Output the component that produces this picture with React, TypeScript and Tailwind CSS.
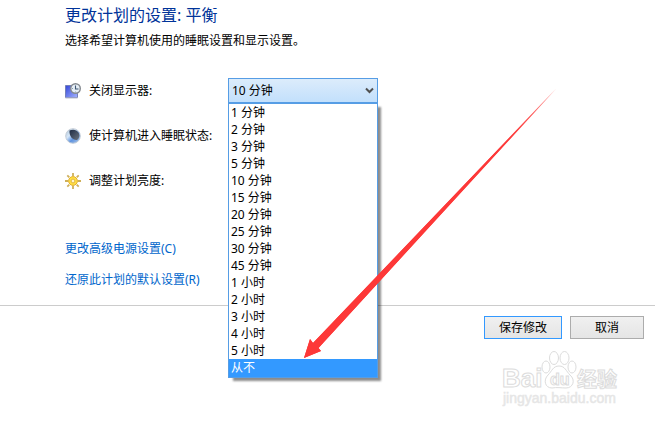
import { useState } from 'react';
import type { ReactNode } from 'react';

const delays = [
  '1 分钟', '2 分钟', '3 分钟', '5 分钟', '10 分钟', '15 分钟', '20 分钟', '25 分钟',
  '30 分钟', '45 分钟', '1 小时', '2 小时', '3 小时', '4 小时', '5 小时', '从不',
];

function DisplayIcon() {
  return (
    <svg className="size-4 shrink-0" viewBox="0 0 16 16" aria-hidden="true">
      <defs>
        <linearGradient id="screen" x1="0" y1="0" x2="1" y2="1">
          <stop offset="0" stopColor="#3346d8" />
          <stop offset="1" stopColor="#a5b4ff" />
        </linearGradient>
      </defs>
      <path d="M0.5 2.5h12v12h-12z" fill="url(#screen)" stroke="#7480b8" />
      <path d="M0.5 15h12" stroke="#b9bdd0" />
      <circle cx="10.5" cy="5.500" r="4.800" fill="#e6eff7" stroke="#84898f" strokeWidth="1.400" />
      <path d="M10.5 2.500v3.500h3" fill="none" stroke="#3d5673" strokeWidth="1.100" />
      <path d="M7 5.500h1M10.5 8.500v1" stroke="#8ca0b4" />
    </svg>
  );
}

function SleepIcon() {
  return (
    <svg className="size-4 shrink-0" viewBox="0 0 16 16" aria-hidden="true">
      <defs>
        <linearGradient id="moon" x1="0" y1="0" x2="1" y2="1">
          <stop offset="0" stopColor="#a9bfd4" />
          <stop offset="0.35" stopColor="#d8e8f8" />
          <stop offset="0.6" stopColor="#5f93e0" />
          <stop offset="1" stopColor="#b3cbe6" />
        </linearGradient>
        <linearGradient id="shade" x1="0" y1="0" x2="1" y2="1">
          <stop offset="0" stopColor="#1d2b44" />
          <stop offset="1" stopColor="#6b7480" />
        </linearGradient>
      </defs>
      <circle cx="8" cy="8" r="7.3" fill="url(#moon)" stroke="#c3ccd6" />
      <path d="M4.500 2.500C8 0.800 12.500 1.600 14 5.500c0.900 2.800 0 5.300-2 6.500C8 12.400 4 8.500 4.500 2.500z" fill="url(#shade)" />
    </svg>
  );
}

function BrightnessIcon() {
  return (
    <svg className="size-4 shrink-0" viewBox="0 0 16 16" aria-hidden="true">
      <path
        d="M8 0v3M8 13v3M0 8h3M13 8h3M2.3 2.3l2 2M11.7 11.7l2 2M2.3 13.7l2-2M11.7 4.3l2-2"
        stroke="#cfb05a"
        strokeWidth="1.8"
      />
      <circle cx="8" cy="8" r="4.400" fill="#ffdf45" stroke="#e3b02c" />
      <circle cx="8" cy="8" r="1.900" fill="#fff6ce" stroke="#dca92c" strokeWidth="0.8" />
    </svg>
  );
}

function SettingLabel({ icon, children }: { icon: ReactNode; children: ReactNode }) {
  return (
    <div className="flex h-[26px] w-[163px] shrink-0 items-center gap-2">
      {icon}
      {children}
    </div>
  );
}

function Pointer() {
  return (
    <svg
      className="pointer-events-none absolute top-2 left-[72px] z-20 h-[276px] w-[260px]"
      viewBox="0 0 260 276"
      aria-hidden="true"
    >
      <defs>
        <linearGradient id="fade" gradientUnits="userSpaceOnUse" x1="256" y1="3" x2="200" y2="62">
          <stop offset="0" stopColor="#fd3838" stopOpacity="0.5" />
          <stop offset="1" stopColor="#fd3838" />
        </linearGradient>
      </defs>
      <path d="M4 272L10 253L13 257L256.500 2.500L18.500 262L21 265Z" fill="url(#fade)" />
      <path d="M4 272L10 253L13 257L256 2.500L18.500 262L21 265Z" fill="url(#fade)" />
    </svg>
  );
}

function Watermark() {
  return (
    <svg
      className="pointer-events-none absolute top-[350px] right-8 h-[60px] w-[124px] font-['Liberation_Sans','Noto_Sans_CJK_SC',sans-serif]"
      viewBox="0 0 124 60"
      aria-label="Baidu 经验 jingyan.baidu.com"
    >
      <g fill="#ffffff" stroke="#dcdcdc" strokeWidth="1">
        <text x="3" y="37" fontSize="26" fontWeight="700">Bai</text>
        <text x="78" y="37" fontSize="20" fontWeight="700">经验</text>
        <ellipse cx="47" cy="17" rx="4" ry="6" />
        <ellipse cx="55" cy="8" rx="4.500" ry="6.500" />
        <ellipse cx="65.500" cy="8" rx="4.500" ry="6.500" />
        <ellipse cx="73" cy="17" rx="4" ry="6" />
        <path d="M60 16c6 0 7 5 11 9c6 5 3 13-4 13c-5 0-9-1-14 0c-7 0-9-8-4-13c4-4 5-9 11-9z" />
        <text x="51" y="35" fontSize="16" fontWeight="700">du</text>
      </g>
      <text x="4" y="53" fontSize="14" fill="#e6e6e6" stroke="#e6e6e6" strokeWidth="0.5">
        jingyan.baidu.com
      </text>
    </svg>
  );
}

export default function App() {
  const [delay, setDelay] = useState('10 分钟');
  return (
    <div className="relative min-h-screen overflow-hidden bg-white pb-8 font-['Noto_Sans','Noto_Sans_CJK_SC',sans-serif] text-xs text-black">
      <main className="pt-[3px] pl-[65px]">
        <h1 className="text-base leading-6 text-[#003399]">更改计划的设置: 平衡</h1>
        <p className="mt-1 leading-5">选择希望计算机使用的睡眠设置和显示设置。</p>

        <div className="mt-[27px] flex flex-col gap-[19px]">
          <div className="flex">
            <SettingLabel icon={<DisplayIcon />}>
              <label htmlFor="display-off">关闭显示器:</label>
            </SettingLabel>
            <div className="relative w-[150px]">
              <select
                id="display-off"
                value={delay}
                onChange={(e) => setDelay(e.target.value)}
                className="block h-[26px] w-full appearance-none border border-[#569de5] bg-linear-to-b from-[#dcecfb] to-[#c1dffc] pl-[3px] outline-none"
              >
                {delays.map((d) => (
                  <option key={d}>{d}</option>
                ))}
              </select>
              <svg className="pointer-events-none absolute top-[9px] right-1 h-2 w-[9px]" viewBox="0 0 9 8" aria-hidden="true">
                <path d="M1 1.500L4.500 5L8 1.500" fill="none" stroke="#505050" strokeWidth="2" />
              </svg>
              <ul
                aria-label="关闭显示器"
                className="absolute top-6 left-0 z-10 w-full border border-t-2 border-[#569de5] bg-white shadow-[4px_4px_2px_-1px_rgba(0,0,0,0.45)]"
              >
                {delays.map((d) => (
                  <li
                    key={d}
                    className={
                      d === '从不'
                        ? 'h-[18px] bg-[#3399ff] pl-0.5 leading-[17px] text-white'
                        : 'h-[17px] pl-0.5 leading-[17px]'
                    }
                  >
                    {d}
                  </li>
                ))}
              </ul>
              <Pointer />
            </div>
          </div>
          <SettingLabel icon={<SleepIcon />}>
            <span className="whitespace-nowrap">使计算机进入睡眠状态:</span>
          </SettingLabel>
          <SettingLabel icon={<BrightnessIcon />}>
            <span>调整计划亮度:</span>
          </SettingLabel>
        </div>

        <nav className="mt-[45px] flex flex-col items-start gap-[11px] leading-5 text-[#0066cc]">
          <a href="#advanced">更改高级电源设置(C)</a>
          <a href="#restore">还原此计划的默认设置(R)</a>
        </nav>
      </main>

      <footer className="mt-[15px] flex justify-end gap-2 border-t border-[#cccccc] pt-[10px] pr-[11px]">
        <button type="button" className="h-[23px] w-[78px] border border-[#3399ff] bg-linear-to-b from-[#f0f0f0] to-[#e5e5e5]">
          保存修改
        </button>
        <button type="button" className="h-[23px] w-[74px] border border-[#acacac] bg-linear-to-b from-[#f0f0f0] to-[#e5e5e5]">
          取消
        </button>
      </footer>
      <Watermark />
    </div>
  );
}
